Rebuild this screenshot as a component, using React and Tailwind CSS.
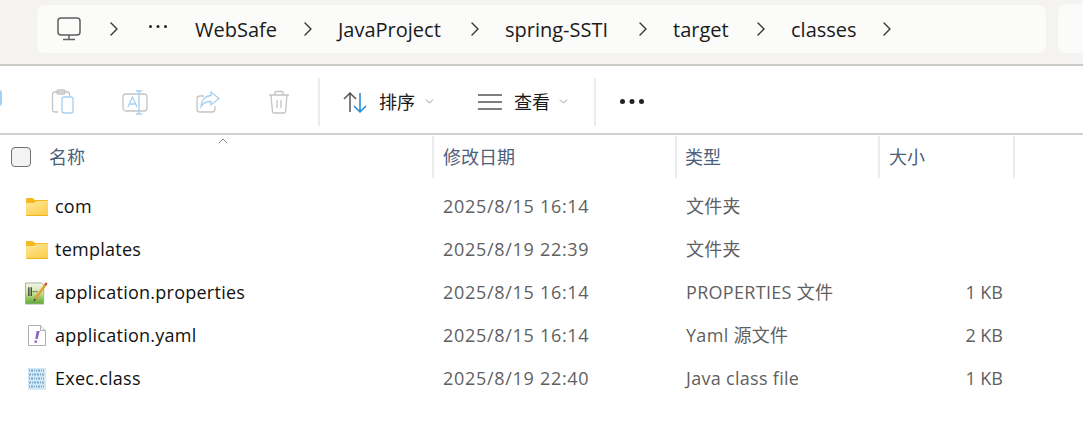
import { ChevronRight, ChevronDown, ChevronUp } from "lucide-react";

const font = { fontFamily: '"Open Sans", "Noto Sans CJK SC", sans-serif' };

const crumbs = [
  { label: "WebSafe", cls: "w-[143px]" },
  { label: "JavaProject", cls: "w-[167px]" },
  { label: "spring-SSTI", cls: "w-[168px]" },
  { label: "target", cls: "w-[118px]" },
  { label: "classes", cls: "w-[126px]" },
];

const FolderIcon = () => (
  <svg width="22" height="18" viewBox="0 0 22 18">
    <defs>
      <linearGradient id="folderBody" x1="0" y1="0" x2="0.6" y2="1">
        <stop offset="0" stopColor="#ffe79c" />
        <stop offset="1" stopColor="#fccf50" />
      </linearGradient>
    </defs>
    <path d="M0 1a1 1 0 0 1 1-1h5.500l2.500 2h12a1 1 0 0 1 1 1v13H0z" fill="#f7b81f" />
    <path d="M0 5h8l2.500-2H22v14a1 1 0 0 1-1 1H1a1 1 0 0 1-1-1z" fill="url(#folderBody)" />
    <path d="M0 17h22a1 1 0 0 1-1 1H1a1 1 0 0 1-1-1z" fill="#f0b41c" />
  </svg>
);

const PropsIcon = () => (
  <svg width="24" height="24" viewBox="0 0 24 24">
    <defs>
      <linearGradient id="propsBody" x1="0" y1="0" x2="0" y2="1">
        <stop offset="0" stopColor="#f4f6ec" />
        <stop offset="0.45" stopColor="#cfe5a0" />
        <stop offset="1" stopColor="#58a82a" />
      </linearGradient>
    </defs>
    <path d="M0.500 1.500h17l2 2v20H0.500z" fill="url(#propsBody)" stroke="#a9ab9f" />
    <path d="M4 6v9M6.500 6v9" stroke="#333" strokeWidth="1.300" />
    <path d="M8 10.500h5" stroke="#666" strokeWidth="1.200" strokeDasharray="2 1" />
    <path d="M10 19L21 4" stroke="#e2a02e" strokeWidth="2.600" />
    <path d="M21 4l1.500-2.500" stroke="#c9503a" strokeWidth="2.600" />
    <path d="M10.800 18l-1.500 2.500" stroke="#444" strokeWidth="1.500" />
  </svg>
);

const YamlIcon = () => (
  <svg width="18" height="21" viewBox="0 0 18 21">
    <path d="M0.500 0.500h12l5 5v15H0.500z" fill="#fff" stroke="#adadad" />
    <path d="M12.500 0.500v5h5" fill="#f0f0f0" stroke="#adadad" />
    <path d="M8.600 6h3l-2 8h-2.300z" fill="#8a62c0" />
    <path d="M6.800 15.500h2.500l-.5 2.300H6.300z" fill="#8a62c0" />
  </svg>
);

const BinaryIcon = () => (
  <svg width="18" height="22" viewBox="0 0 18 22">
    <rect width="18" height="22" fill="#d3e9f8" />
    {[2.500, 6.500, 10.500, 14.500, 18.500].map((y, i) => (
      <path
        key={y}
        d={`M1 ${y}h16`}
        stroke="#7ba6c6"
        strokeWidth="2.200"
        strokeDasharray={i % 2 ? "2 1 1 1 2 1" : "1 1 2 1 1 1"}
      />
    ))}
  </svg>
);

const Dots = ({ size, r, className }) => (
  <svg width={size} height={r * 2} viewBox={`0 0 ${size} ${r * 2}`} className={`shrink-0 ${className}`}>
    <circle cx={r} cy={r} r={r} fill="#222" />
    <circle cx={size / 2} cy={r} r={r} fill="#222" />
    <circle cx={size - r} cy={r} r={r} fill="#222" />
  </svg>
);

const rows = [
  { icon: <FolderIcon />, name: "com", date: "2025/8/15 16:14", type: "文件夹", size: "" },
  { icon: <FolderIcon />, name: "templates", date: "2025/8/19 22:39", type: "文件夹", size: "" },
  { icon: <PropsIcon />, name: "application.properties", date: "2025/8/15 16:14", type: "PROPERTIES 文件", size: "1 KB" },
  { icon: <YamlIcon />, name: "application.yaml", date: "2025/8/15 16:14", type: "Yaml 源文件", size: "2 KB" },
  { icon: <BinaryIcon />, name: "Exec.class", date: "2025/8/19 22:40", type: "Java class file", size: "1 KB" },
];

const ToolIcon = ({ children }) => (
  <svg width="26" height="26" viewBox="0 0 26 26" fill="none" strokeWidth="1.300" className="shrink-0">
    {children}
  </svg>
);

const App = () => {
  return (
    <div className="w-[1083px] h-[438px] bg-white overflow-hidden text-[#1a1a1a]" style={font}>
      {/* address bar */}
      <div className="h-[66px] bg-[#f4f3f2] border-b-2 border-[#cdc9c5] flex items-start pt-[5px] pl-[37px]">
        <div className="w-[1009px] h-[48px] bg-[#fbfbfa] rounded-lg flex items-center pl-[20px] shrink-0">
          <svg width="24" height="24" viewBox="0 0 24 24" fill="none" stroke="#5f5f5f" strokeWidth="1.500" className="shrink-0">
            <rect x="1" y="1" width="22" height="17" rx="3" />
            <path d="M12 18v4M6 22.500h12" />
          </svg>
          <ChevronRight size={24} strokeWidth={1.400} className="ml-[21px] shrink-0 text-[#333]" />
          <Dots size={18} r={1.500} className="ml-[23px] -mt-[6px]" />
          <div className="flex items-center ml-[28px]">
            {crumbs.map((c) => (
              <div key={c.label} className={`flex items-center justify-between shrink-0 ${c.cls}`}>
                <span className="text-[20px] leading-none whitespace-nowrap pt-[1px]">{c.label}</span>
                <ChevronRight size={24} strokeWidth={1.400} className="mr-[18px] text-[#333]" />
              </div>
            ))}
          </div>
        </div>
        <div className="w-[40px] h-[49px] bg-[#fbfbfa] rounded-lg ml-[12px] -mt-[1px] shrink-0" />
      </div>

      {/* toolbar */}
      <div className="h-[69px] border-b-2 border-[#d2cfcc] flex items-center pt-[4px]">
        <div className="relative flex items-center gap-[46px] pl-[50px] w-[320px] h-[48px] border-r-2 border-[#ececec] shrink-0">
          <div className="absolute -left-[6px] top-[12px] w-[8px] h-[16px] rounded-[3px] bg-[#a6d0f2]" />
          <ToolIcon>
            <path d="M8 23H4.500a2 2 0 0 1-2-2V5a2 2 0 0 1 2-2h13a2 2 0 0 1 2 2v3" stroke="#c4c4c4" />
            <rect x="7" y="1" width="8" height="4" rx="1" stroke="#c4c4c4" />
            <rect x="12" y="8" width="11" height="16" rx="2" stroke="#a6d0f2" />
          </ToolIcon>
          <ToolIcon>
            <rect x="1" y="5" width="24" height="17" rx="3" stroke="#c4c4c4" />
            <path d="M17 2v23M14 2h6M14 25h6" stroke="#a6d0f2" />
            <path d="M6 18l4.500-10L15 18M7.500 15h6" stroke="#a6d0f2" />
          </ToolIcon>
          <ToolIcon>
            <path d="M21 17v3a3 3 0 0 1-3 3H6a3 3 0 0 1-3-3V10a3 3 0 0 1 3-3h4" stroke="#c4c4c4" />
            <path d="M17 3l8 6.500-8 6.500v-3.500c-5 0-8 1.500-10 5 0-6 4-10.500 10-11z" stroke="#a6d0f2" />
          </ToolIcon>
          <ToolIcon>
            <path d="M3 6h20M9 6V3.500a1 1 0 0 1 1-1h6a1 1 0 0 1 1 1V6M5 6l1.500 17a1.500 1.500 0 0 0 1.500 1h10a1.500 1.500 0 0 0 1.500-1L21 6M11 11v8M15 11v8" stroke="#c4c4c4" />
          </ToolIcon>
        </div>
        <div className="flex items-center w-[276px] h-[48px] border-r-2 border-[#ececec] shrink-0">
          <svg width="26" height="26" viewBox="0 0 26 26" fill="none" strokeWidth="1.500" className="ml-[22px] shrink-0">
            <path d="M8 23V4M2 10l6-6 6 6" stroke="#555" />
            <path d="M18 4v19M12 17l6 6 6-6" stroke="#1e88d9" />
          </svg>
          <span className="ml-[11px] text-[18px] leading-none whitespace-nowrap">排序</span>
          <ChevronDown size={13} strokeWidth={1.200} className="ml-[8px] text-[#666] shrink-0" />
          <svg width="24" height="18" viewBox="0 0 24 18" fill="none" stroke="#555" strokeWidth="1.500" className="ml-[42px] shrink-0">
            <path d="M0 2h24M0 9h24M0 16h24" />
          </svg>
          <span className="ml-[12px] text-[18px] leading-none whitespace-nowrap">查看</span>
          <ChevronDown size={13} strokeWidth={1.200} className="ml-[7px] text-[#666] shrink-0" />
        </div>
        <Dots size={24} r={2.500} className="ml-[24px]" />
      </div>

      {/* column header */}
      <div className="h-[43px] flex text-[18px] text-[#4c607a] relative pt-[1px]">
        <ChevronUp size={16} strokeWidth={1} className="absolute left-[215px] -top-[2px] text-[#555]" />
        <div className="w-[434px] flex items-center border-r-2 border-[#ececec] pl-[11px] shrink-0">
          <div className="w-[20px] h-[20px] rounded-[4px] border border-[#707070] bg-[#f3f3f3] shrink-0" />
          <span className="ml-[18px]">名称</span>
        </div>
        <div className="w-[243px] flex items-center border-r-2 border-[#ececec] pl-[9px] shrink-0">修改日期</div>
        <div className="w-[203px] flex items-center border-r-2 border-[#ececec] pl-[8px] shrink-0">类型</div>
        <div className="w-[135px] flex items-center border-r-2 border-[#ececec] pl-[9px] shrink-0">大小</div>
      </div>

      {/* rows */}
      <div className="flex flex-col pt-[7px] text-[18px]">
        {rows.map((r) => (
          <div key={r.name} className="h-[43px] flex items-center shrink-0">
            <div className="w-[434px] flex items-center shrink-0">
              <div className="w-[55px] flex justify-center pl-[25px] pr-[7px] shrink-0">{r.icon}</div>
              <span className="text-[#111] whitespace-nowrap tracking-[0.25px]">{r.name}</span>
            </div>
            <div className="w-[243px] pl-[9px] text-[#5f5f5f] whitespace-nowrap tracking-[0.7px] shrink-0">{r.date}</div>
            <div className="w-[203px] pl-[9px] text-[#5f5f5f] whitespace-nowrap tracking-[0.3px] shrink-0">{r.type}</div>
            <div className="w-[123px] text-right text-[#5f5f5f] whitespace-nowrap shrink-0">{r.size}</div>
          </div>
        ))}
      </div>
    </div>
  );
};

export default App;
